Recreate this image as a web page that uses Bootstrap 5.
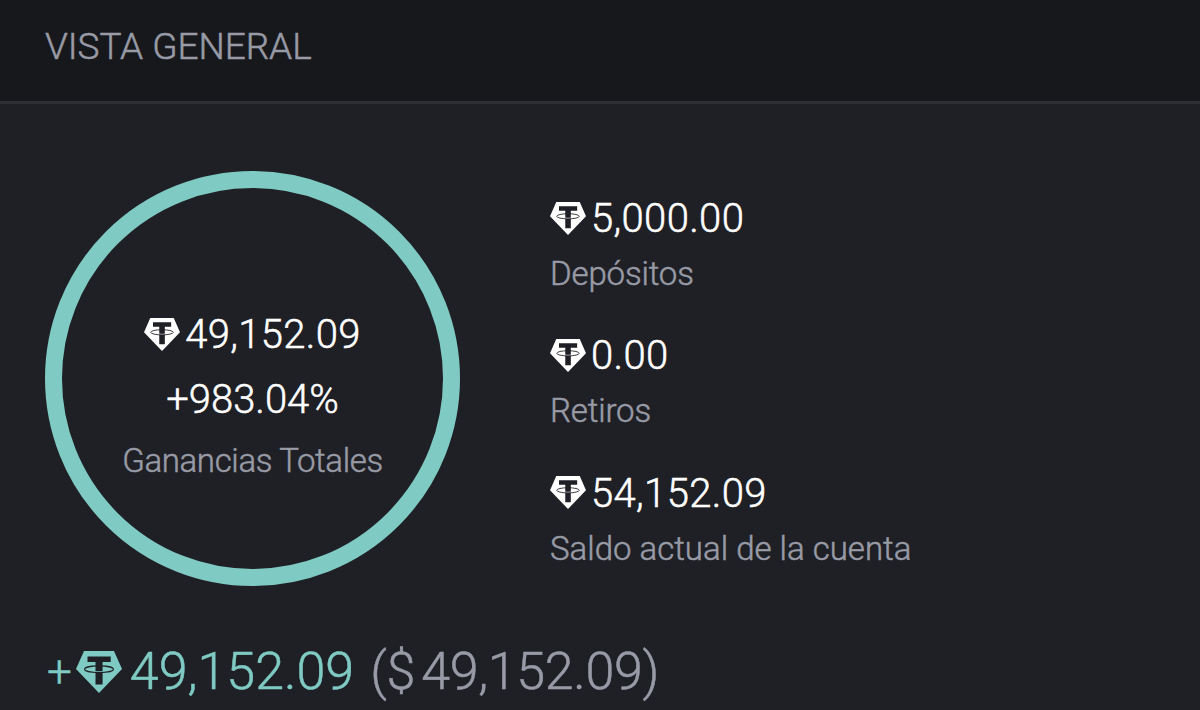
<!DOCTYPE html>
<html lang="es">
<head>
<meta charset="utf-8">
<meta name="viewport" content="width=device-width, initial-scale=1">
<title>Vista general</title>
<link href="https://cdn.jsdelivr.net/npm/bootstrap@5.3.0/dist/css/bootstrap.min.css" rel="stylesheet">
<style>
body{background:#1f2025;color:#fff;font-family:Roboto,"Liberation Sans",sans-serif;font-weight:300;height:710px;overflow:hidden;-webkit-text-stroke:.5px currentColor}
.top-bar{height:104px;background:#17181c;border-bottom:3px solid #2f3035;padding:0 45px 7px}
.top-bar h1{font-size:37px;line-height:44px;font-weight:300;color:#989ba6;letter-spacing:-.05px}
.overview{padding:67px 45px 0;height:482px}
.ring{width:415px;height:415px;border:17px solid #7fcac3;flex:none;padding-top:123px}
.ring .pct{margin-top:17px;letter-spacing:0}
.ring .caption{margin-top:17px;letter-spacing:-.35px}
.amount{font-size:40px;line-height:48px;white-space:nowrap;letter-spacing:.35px}
.amount svg{width:36px;height:33px;margin:0 5px 2px 0;flex:none}
.caption{font-size:33px;line-height:40px;color:#989ba6;white-space:nowrap;letter-spacing:0}
.stats{margin-left:90px;padding-top:24px}
.stats .item{height:137.3px}
.stats .caption{margin-top:11px}
.stats .short{letter-spacing:-.15px}
.total{font-size:52px;line-height:60px;padding:56px 45px 0;color:#7fcac3;white-space:nowrap;letter-spacing:0}
.total .sign{font-size:44px;margin-left:2px}
.total svg{width:46px;height:42px;margin:0 8px 0 4px;flex:none}
.fiat{color:#989ba6;margin-left:16px;word-spacing:-6px;letter-spacing:-.35px}
</style>
</head>
<body>
<svg class="d-none" aria-hidden="true">
  <symbol id="tether" viewBox="0 0 46 42">
    <path fill="currentColor" d="M8 0H38L46 18 23 42 0 18Z"/>
    <path fill="#1f2025" d="M11.5 5.5H34.7V11H26.6V33.4H19.5V11H11.5Z"/>
    <path fill="none" stroke="currentColor" stroke-width="1.2" d="M19 20.6Q23 21 27 20.6"/>
    <ellipse cx="23" cy="18.2" rx="14.4" ry="3.3" fill="none" stroke="#1f2025" stroke-width="1.1"/>
  </symbol>
</svg>
<header class="top-bar d-flex align-items-center"><h1 class="m-0">VISTA GENERAL</h1></header>
<main>
  <section class="overview d-flex align-items-start">
    <div class="ring rounded-circle d-flex flex-column align-items-center">
      <div class="amount d-flex align-items-center"><svg><use href="#tether"/></svg><span>49,152.09</span></div>
      <div class="amount pct">+983.04%</div>
      <div class="caption">Ganancias Totales</div>
    </div>
    <div class="stats">
      <div class="item"><div class="amount d-flex align-items-center"><svg><use href="#tether"/></svg><span>5,000.00</span></div><div class="caption short">Depósitos</div></div>
      <div class="item"><div class="amount d-flex align-items-center"><svg><use href="#tether"/></svg><span>0.00</span></div><div class="caption short">Retiros</div></div>
      <div class="item"><div class="amount d-flex align-items-center"><svg><use href="#tether"/></svg><span>54,152.09</span></div><div class="caption">Saldo actual de la cuenta</div></div>
    </div>
  </section>
  <div class="total d-flex align-items-center"><span class="sign">+</span><svg><use href="#tether"/></svg><span>49,152.09</span><span class="fiat">($ 49,152.09)</span></div>
</main>
<script src="https://cdn.jsdelivr.net/npm/bootstrap@5.3.0/dist/js/bootstrap.bundle.min.js"></script>
</body>
</html>
